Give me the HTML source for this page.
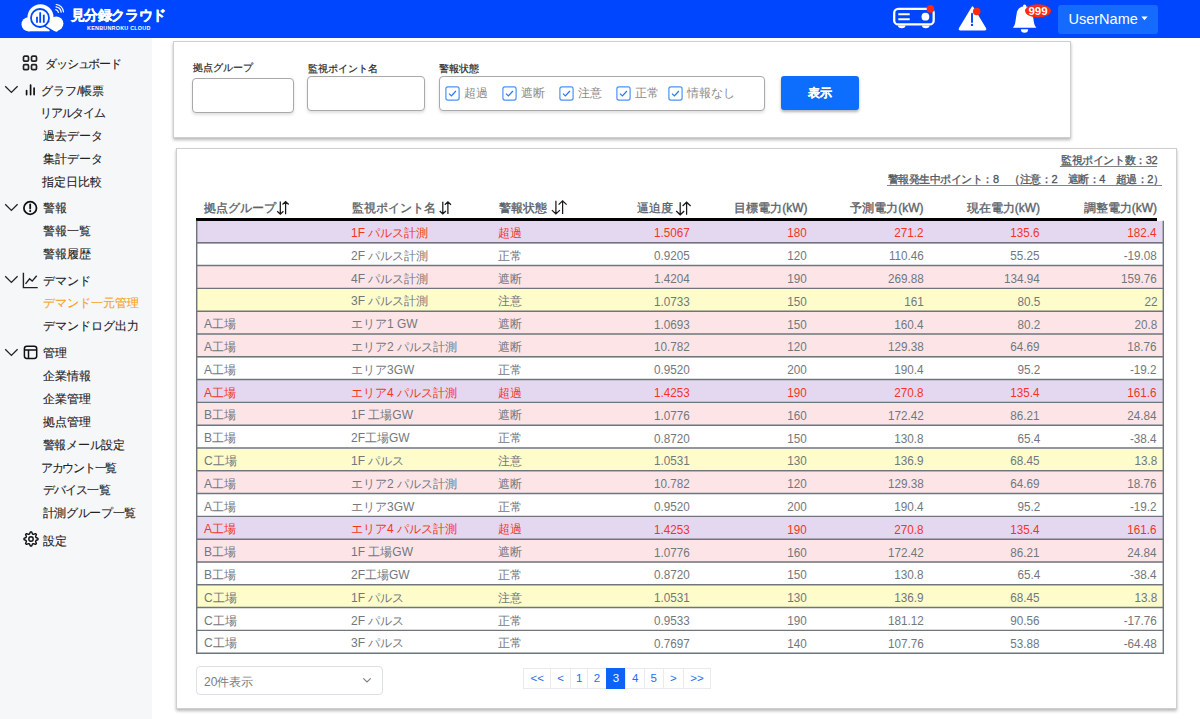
<!DOCTYPE html>
<html lang="ja"><head><meta charset="utf-8"><title>見分録クラウド</title>
<style>
*{box-sizing:border-box}
html,body{margin:0;padding:0}
body{width:1200px;height:719px;overflow:hidden;position:relative;background:#fff;font-family:"Liberation Sans",sans-serif;color:#222}
.abs{position:absolute}
#hdr{position:absolute;left:0;top:0;width:1200px;height:38px;background:#0046ff}
#side{position:absolute;left:0;top:38px;width:152px;height:681px;background:#f6f7f9}
.si{position:absolute;font-size:12px;line-height:22px;height:22px;white-space:nowrap;color:#222;-webkit-text-stroke:0.12px #222}
.si.act{color:#f7a21b;-webkit-text-stroke:0.12px #f7a21b}
.ic{position:absolute;display:block}
.card{position:absolute;background:#fff;border:1px solid #cfcfcf;box-shadow:0 2px 3px rgba(0,0,0,.28)}
.lbl{position:absolute;font-size:10px;line-height:12px;color:#2a2a2a;-webkit-text-stroke:0.2px #2a2a2a;white-space:nowrap}
.inp{position:absolute;background:#fff;border:1px solid #a9a9a9;border-radius:4px;box-shadow:0 2px 3px rgba(0,0,0,.12)}
.cb{position:absolute;width:15px;height:15px}
.cb svg{display:block}
.cbt{position:absolute;font-size:12px;line-height:20px;color:#8a8a8a;white-space:nowrap}
.btn{position:absolute;background:#0d6efd;color:#fff;font-size:12px;font-weight:bold;-webkit-text-stroke:0.2px #fff;text-align:center;border-radius:3px;box-shadow:0 2px 3px rgba(0,0,0,.3)}
.row{position:absolute;left:196px;width:968px;height:22.85px}
.row.p{background:#e3d8ef}
.row.k{background:#fde5e7}
.row.y{background:#fefccb}
.row.w{background:#fff}
.c{position:absolute;top:2.2px;font-size:12px;line-height:21.75px;color:#72777e;white-space:nowrap}
.row.p .c{color:#f6341e}
.c.n{font-size:13px;transform:scaleX(0.9);transform-origin:100% 50%;top:1.6px}
.th{position:absolute;top:199.5px;font-size:12px;line-height:16px;color:#5c6269;-webkit-text-stroke:0.35px #5c6269;white-space:nowrap}
.sort{position:absolute;display:block}
.pg{position:absolute;top:668.3px;height:20.8px;border:1px solid #e8eaed;background:#fff;color:#1a6ef7;font-size:11.5px;line-height:18.8px;text-align:center}
.pg.on{background:#0d63f7;border-color:#0d63f7;color:#fff}
</style></head><body>
<div id="hdr">
 <svg class="abs" style="left:19px;top:2px" width="48" height="32" viewBox="0 0 48 32">
  <g fill="#fff">
   <circle cx="9.6" cy="22.3" r="7.1"/>
   <circle cx="21.5" cy="15.3" r="13"/>
   <rect x="9.6" y="19" width="21" height="10.3"/>
  </g>
  <path d="M26.8 21.2L37 27.2" stroke="#0046ff" stroke-width="7.6" stroke-linecap="round"/>
  <circle cx="37.2" cy="21.6" r="7.2" fill="#fff"/>
  <path d="M26.8 21.2L37 27.2" stroke="#fff" stroke-width="5" stroke-linecap="round"/>
  <circle cx="21" cy="16" r="9" fill="#fff" stroke="#0046ff" stroke-width="1.8"/>
  <path d="M18 14.7V20.7M21.2 10.3V20.7M24.8 12.7V20.7" stroke="#0046ff" stroke-width="1.8"/>
  <g fill="none" stroke="#fff" stroke-width="1.2" stroke-linecap="round">
   <path d="M36.8 7.6A3.6 3.6 0 0 1 39.4 10.4"/>
   <path d="M37 4.9A6.2 6.2 0 0 1 42.2 10.2"/>
   <path d="M37.2 2.5A8.6 8.6 0 0 1 44.5 9.9"/>
  </g>
 </svg>
 <div class="abs" style="left:70.5px;top:6px;font-size:14px;line-height:18px;font-weight:bold;color:#fff;white-space:nowrap;letter-spacing:-0.4px;-webkit-text-stroke:0.3px #fff">見分録クラウド</div>
 <div class="abs" style="left:87px;top:24.5px;font-size:5.4px;line-height:6px;font-weight:bold;color:#fff;white-space:nowrap;letter-spacing:0.25px">KENBUNROKU CLOUD</div>

 <svg class="abs" style="left:890px;top:4px" width="48" height="28" viewBox="0 0 48 28">
  <rect x="4.2" y="4.9" width="39.5" height="15.5" rx="4" fill="none" stroke="#fff" stroke-width="2.3"/>
  <path d="M8.3 10.3H19.7M8.3 15.3H19.7" stroke="#fff" stroke-width="2"/>
  <circle cx="35.4" cy="12.7" r="3.9" fill="#fff"/>
  <path d="M8 21.6H15.5A3.7 2.6 0 0 1 8 21.6Z" fill="#fff"/>
  <path d="M32 21.6H39.5A3.7 2.6 0 0 1 32 21.6Z" fill="#fff"/>
  <circle cx="40.4" cy="4.9" r="3.8" fill="#fb2a10"/>
 </svg>
 <svg class="abs" style="left:955px;top:3px" width="36" height="30" viewBox="0 0 36 30">
  <path d="M17.5 4.2L30.3 25.5Q31 26.6 29.7 26.6H5.3Q4 26.6 4.7 25.5Z" fill="#fff" stroke="#fff" stroke-width="1.6" stroke-linejoin="round"/>
  <path d="M17 10.8V19" stroke="#0046ff" stroke-width="1.9" stroke-linecap="round"/>
  <circle cx="17" cy="21.9" r="1.2" fill="#0046ff"/>
  <circle cx="21.7" cy="8.5" r="3.8" fill="#fb2a10"/>
 </svg>
 <svg class="abs" style="left:1005px;top:0" width="50" height="38" viewBox="0 0 50 38">
  <path d="M19.6 6.3C15.5 6.3 11.9 9.2 11.5 14.5L10.3 22.3C9.9 24.9 9 26.3 7.9 27.7H31.3C30.2 26.3 29.3 24.9 28.9 22.3L27.7 14.5C27.3 9.2 23.7 6.3 19.6 6.3Z" fill="#fff"/>
  <circle cx="19.6" cy="6" r="1.6" fill="#fff"/>
  <path d="M15.9 29.2H23.1A3.6 3.5 0 0 1 15.9 29.2Z" fill="#fff"/>
  <ellipse cx="33" cy="10.8" rx="13" ry="6.6" fill="#fb2a10"/>
 </svg>
 <div class="abs" style="left:1025px;top:4px;width:26px;height:14px;color:#fff;font-size:11.5px;line-height:14px;font-weight:bold;text-align:center">999</div>
 <div class="abs" style="left:1058px;top:4.5px;width:100px;height:29px;border-radius:3px;background:#156bff"></div>
 <div class="abs" style="left:1068.5px;top:9px;font-size:14.5px;line-height:20px;color:#fff;white-space:nowrap">UserName</div>
 <svg class="abs" style="left:1141px;top:16px" width="7" height="5" viewBox="0 0 7 5"><path d="M0.4 0.6H6.6L3.5 4.2Z" fill="#fff"/></svg>
</div>

<div id="side"></div>
<svg class="ic" style="left:22px;top:55.0px" width="16" height="16" viewBox="0 0 16 16" fill="none" stroke="#222" stroke-width="1.7"><rect x="1.5" y="1.2" width="5" height="5" rx="1.2"/><rect x="9.5" y="1.2" width="5" height="5" rx="1.2"/><rect x="1.5" y="9.7" width="5" height="5" rx="1.2"/><rect x="9.5" y="9.7" width="5" height="5" rx="1.2"/></svg>
<div class="si" style="left:45.2px;top:52.75px;letter-spacing:-1.2px">ダッシュボード</div>
<svg class="ic" style="left:4px;top:84.9px" width="15" height="9" viewBox="0 0 15 9"><path d="M1.2 1.2L7.4 7.4L13.6 1.2" fill="none" stroke="#222" stroke-width="1.3"/></svg><svg class="ic" style="left:24px;top:83.5px" width="13" height="12" viewBox="0 0 13 12" fill="none" stroke="#111" stroke-width="1.7" stroke-linecap="round"><path d="M2.6 6.6V10.6M6.6 1V10.6M10.1 4V10.6"/></svg>
<div class="si" style="left:41.0px;top:79.90px">グラフ/帳票</div>
<div class="si" style="left:40.0px;top:102.20px;letter-spacing:-1.2px">リアルタイム</div>
<div class="si" style="left:42.5px;top:125.00px">過去データ</div>
<div class="si" style="left:42.5px;top:147.90px">集計データ</div>
<div class="si" style="left:42.0px;top:170.90px">指定日比較</div>
<svg class="ic" style="left:4px;top:202.9px" width="15" height="9" viewBox="0 0 15 9"><path d="M1.2 1.2L7.4 7.4L13.6 1.2" fill="none" stroke="#222" stroke-width="1.3"/></svg><svg class="ic" style="left:22px;top:199.5px" width="16" height="16" viewBox="0 0 16 16"><circle cx="8.2" cy="8" r="6.3" fill="none" stroke="#111" stroke-width="1.75"/><path d="M8.2 4.4V8.5" stroke="#111" stroke-width="1.8" stroke-linecap="round"/><circle cx="8.2" cy="11.1" r="1.05" fill="#111"/></svg>
<div class="si" style="left:42.5px;top:197.30px">警報</div>
<div class="si" style="left:42.5px;top:220.00px">警報一覧</div>
<div class="si" style="left:42.5px;top:242.60px">警報履歴</div>
<svg class="ic" style="left:4px;top:275.4px" width="15" height="9" viewBox="0 0 15 9"><path d="M1.2 1.2L7.4 7.4L13.6 1.2" fill="none" stroke="#222" stroke-width="1.3"/></svg><svg class="ic" style="left:22px;top:272.0px" width="17" height="17" viewBox="0 0 17 17" fill="none" stroke="#222" stroke-width="1.4"><path d="M1.4 0.8V15.6H15.7"/><path d="M3.5 11.9L7.6 6.8L10.2 9.1L14.7 3.8"/></svg>
<div class="si" style="left:42.5px;top:269.50px">デマンド</div>
<div class="si act" style="left:42.5px;top:292.40px">デマンド一元管理</div>
<div class="si" style="left:42.5px;top:314.60px">デマンドログ出力</div>
<svg class="ic" style="left:4px;top:347.9px" width="15" height="9" viewBox="0 0 15 9"><path d="M1.2 1.2L7.4 7.4L13.6 1.2" fill="none" stroke="#222" stroke-width="1.3"/></svg><svg class="ic" style="left:23px;top:345.0px" width="15" height="15" viewBox="0 0 15 15" fill="none" stroke="#111" stroke-width="1.5"><rect x="1.4" y="1.2" width="12.3" height="12.3" rx="2.4"/><path d="M1.4 4.9H13.7M5.5 4.9V13.5"/></svg>
<div class="si" style="left:42.5px;top:342.30px">管理</div>
<div class="si" style="left:42.5px;top:365.00px">企業情報</div>
<div class="si" style="left:42.5px;top:388.10px">企業管理</div>
<div class="si" style="left:42.5px;top:411.00px">拠点管理</div>
<div class="si" style="left:42.5px;top:434.30px;letter-spacing:-0.25px">警報メール設定</div>
<div class="si" style="left:41.0px;top:456.60px;letter-spacing:-1.3px">アカウント一覧</div>
<div class="si" style="left:42.5px;top:479.30px;letter-spacing:-0.8px">デバイス一覧</div>
<div class="si" style="left:42.5px;top:502.10px;letter-spacing:-0.3px">計測グループ一覧</div>
<svg class="ic" style="left:22.5px;top:530.7px" width="16" height="16" viewBox="0 0 16 16" fill="none" stroke="#111" stroke-width="1.4" stroke-linejoin="round"><polygon points="7.31,1.03 8.69,1.03 9.51,3.02 10.45,3.41 12.44,2.59 13.41,3.56 12.59,5.55 12.98,6.49 14.97,7.31 14.97,8.69 12.98,9.51 12.59,10.45 13.41,12.44 12.44,13.41 10.45,12.59 9.51,12.98 8.69,14.97 7.31,14.97 6.49,12.98 5.55,12.59 3.56,13.41 2.59,12.44 3.41,10.45 3.02,9.51 1.03,8.69 1.03,7.31 3.02,6.49 3.41,5.55 2.59,3.56 3.56,2.59 5.55,3.41 6.49,3.02"/><circle cx="8" cy="8" r="2.2"/></svg>
<div class="si" style="left:42.5px;top:529.70px">設定</div>

<div class="card" style="left:173px;top:41px;width:898px;height:96.5px"></div>
<div class="lbl" style="left:193px;top:61.5px">拠点グループ</div>
<div class="inp" style="left:192px;top:77.5px;width:101.5px;height:35px"></div>
<div class="lbl" style="left:307.5px;top:63px">監視ポイント名</div>
<div class="inp" style="left:307px;top:76.3px;width:118px;height:34.6px"></div>
<div class="lbl" style="left:439px;top:63px">警報状態</div>
<div class="inp" style="left:439px;top:76.3px;width:326px;height:34.8px"></div>
<div class="cb" style="left:444.8px;top:85.5px"><svg width="15" height="15" viewBox="0 0 15 15"><rect x="0.9" y="0.9" width="13.2" height="13.2" rx="2" fill="#fff" stroke="#4b93f5" stroke-width="1.2"/><path d="M4 7.6L6.4 9.9L10.9 5" fill="none" stroke="#2a78ea" stroke-width="1.25"/></svg></div>
<div class="cbt" style="left:463.8px;top:83px">超過</div>
<div class="cb" style="left:502.0px;top:85.5px"><svg width="15" height="15" viewBox="0 0 15 15"><rect x="0.9" y="0.9" width="13.2" height="13.2" rx="2" fill="#fff" stroke="#4b93f5" stroke-width="1.2"/><path d="M4 7.6L6.4 9.9L10.9 5" fill="none" stroke="#2a78ea" stroke-width="1.25"/></svg></div>
<div class="cbt" style="left:521.0px;top:83px">遮断</div>
<div class="cb" style="left:559.2px;top:85.5px"><svg width="15" height="15" viewBox="0 0 15 15"><rect x="0.9" y="0.9" width="13.2" height="13.2" rx="2" fill="#fff" stroke="#4b93f5" stroke-width="1.2"/><path d="M4 7.6L6.4 9.9L10.9 5" fill="none" stroke="#2a78ea" stroke-width="1.25"/></svg></div>
<div class="cbt" style="left:578.2px;top:83px">注意</div>
<div class="cb" style="left:616.3px;top:85.5px"><svg width="15" height="15" viewBox="0 0 15 15"><rect x="0.9" y="0.9" width="13.2" height="13.2" rx="2" fill="#fff" stroke="#4b93f5" stroke-width="1.2"/><path d="M4 7.6L6.4 9.9L10.9 5" fill="none" stroke="#2a78ea" stroke-width="1.25"/></svg></div>
<div class="cbt" style="left:635.3px;top:83px">正常</div>
<div class="cb" style="left:667.5px;top:85.5px"><svg width="15" height="15" viewBox="0 0 15 15"><rect x="0.9" y="0.9" width="13.2" height="13.2" rx="2" fill="#fff" stroke="#4b93f5" stroke-width="1.2"/><path d="M4 7.6L6.4 9.9L10.9 5" fill="none" stroke="#2a78ea" stroke-width="1.25"/></svg></div>
<div class="cbt" style="left:686.5px;top:83px">情報なし</div>
<div class="btn" style="left:781px;top:75.6px;width:77.5px;height:34.2px;line-height:34.2px">表示</div>

<div class="card" style="left:176px;top:148px;width:1000.5px;height:560.5px"></div>
<div class="abs" style="left:1060px;top:152.5px;width:96.5px;height:14.3px;border-bottom:1px solid #80858c"></div>
<div class="abs" id="t1" style="left:1061px;top:152.5px;font-size:11px;line-height:14px;color:#50565e;white-space:nowrap;-webkit-text-stroke:0.3px #50565e;letter-spacing:-0.4px">監視ポイント数：32</div>
<div class="abs" style="left:887px;top:172.3px;width:274.5px;height:14.2px;border-bottom:1px solid #80858c"></div>
<div class="abs" id="t2" style="left:887.5px;top:172.3px;font-size:11px;line-height:14px;color:#50565e;white-space:nowrap;-webkit-text-stroke:0.3px #50565e;letter-spacing:-0.45px">警報発生中ポイント：8　（注意：2　遮断：4　超過：2）</div>

<div class="th" style="left:204px">拠点グループ</div>
<div class="th" style="left:351.5px">監視ポイント名</div>
<div class="th" style="left:498.5px">警報状態</div>
<div class="th" style="right:527px">逼迫度</div>
<div class="th" style="right:392.5px">目標電力(kW)</div>
<div class="th" style="right:276.5px">予測電力(kW)</div>
<div class="th" style="right:160px">現在電力(kW)</div>
<div class="th" style="right:43px">調整電力(kW)</div>
<svg class="abs" style="left:0;top:195px" width="1200" height="25" viewBox="0 195 1200 25"><path d="M280.3 201.5V213.89999999999998M277.2 211.255L280.3 214.2L283.40000000000003 211.255M285.6 214.2V201.8M282.5 204.445L285.6 201.5L288.70000000000005 204.445M442.8 201.8V213.7M439.7 211.055L442.8 214.0L445.90000000000003 211.055M447.9 214.0V202.10000000000002M444.79999999999995 204.745L447.9 201.8L451.0 204.745M555.9 200.8V213.6M551.9 210.1L555.9 213.9L559.9 210.1M562.6 213.9V201.10000000000002M558.6 204.60000000000002L562.6 200.8L566.6 204.60000000000002M680.2 202.2V214.5M676.2 211.0L680.2 214.8L684.2 211.0M686.6 214.8V202.5M682.6 206.0L686.6 202.2L690.6 206.0" fill="none" stroke="#1a1a1a" stroke-width="1.25"/></svg>
<div class="abs" style="left:196px;top:218.1px;width:961px;height:2.7px;background:#000"></div>
<div class="row p" style="top:220.80px">
<span class="c l" style="left:8.0px"></span>
<span class="c l" style="left:155.0px">1F パルス計測</span>
<span class="c l" style="left:302.0px">超過</span>
<span class="c r n" style="right:474.0px">1.5067</span>
<span class="c r n" style="right:357.0px">180</span>
<span class="c r n" style="right:240.5px">271.2</span>
<span class="c r n" style="right:124.0px">135.6</span>
<span class="c r n" style="right:7.0px">182.4</span>
</div>
<div class="row w" style="top:243.60px">
<span class="c l" style="left:8.0px"></span>
<span class="c l" style="left:155.0px">2F パルス計測</span>
<span class="c l" style="left:302.0px">正常</span>
<span class="c r n" style="right:474.0px">0.9205</span>
<span class="c r n" style="right:357.0px">120</span>
<span class="c r n" style="right:240.5px">110.46</span>
<span class="c r n" style="right:124.0px">55.25</span>
<span class="c r n" style="right:7.0px">-19.08</span>
</div>
<div class="row k" style="top:266.40px">
<span class="c l" style="left:8.0px"></span>
<span class="c l" style="left:155.0px">4F パルス計測</span>
<span class="c l" style="left:302.0px">遮断</span>
<span class="c r n" style="right:474.0px">1.4204</span>
<span class="c r n" style="right:357.0px">190</span>
<span class="c r n" style="right:240.5px">269.88</span>
<span class="c r n" style="right:124.0px">134.94</span>
<span class="c r n" style="right:7.0px">159.76</span>
</div>
<div class="row y" style="top:289.20px">
<span class="c l" style="left:8.0px"></span>
<span class="c l" style="left:155.0px">3F パルス計測</span>
<span class="c l" style="left:302.0px">注意</span>
<span class="c r n" style="right:474.0px">1.0733</span>
<span class="c r n" style="right:357.0px">150</span>
<span class="c r n" style="right:240.5px">161</span>
<span class="c r n" style="right:124.0px">80.5</span>
<span class="c r n" style="right:7.0px">22</span>
</div>
<div class="row k" style="top:312.00px">
<span class="c l" style="left:8.0px">A工場</span>
<span class="c l" style="left:155.0px">エリア1 GW</span>
<span class="c l" style="left:302.0px">遮断</span>
<span class="c r n" style="right:474.0px">1.0693</span>
<span class="c r n" style="right:357.0px">150</span>
<span class="c r n" style="right:240.5px">160.4</span>
<span class="c r n" style="right:124.0px">80.2</span>
<span class="c r n" style="right:7.0px">20.8</span>
</div>
<div class="row k" style="top:334.80px">
<span class="c l" style="left:8.0px">A工場</span>
<span class="c l" style="left:155.0px">エリア2 パルス計測</span>
<span class="c l" style="left:302.0px">遮断</span>
<span class="c r n" style="right:474.0px">10.782</span>
<span class="c r n" style="right:357.0px">120</span>
<span class="c r n" style="right:240.5px">129.38</span>
<span class="c r n" style="right:124.0px">64.69</span>
<span class="c r n" style="right:7.0px">18.76</span>
</div>
<div class="row w" style="top:357.60px">
<span class="c l" style="left:8.0px">A工場</span>
<span class="c l" style="left:155.0px">エリア3GW</span>
<span class="c l" style="left:302.0px">正常</span>
<span class="c r n" style="right:474.0px">0.9520</span>
<span class="c r n" style="right:357.0px">200</span>
<span class="c r n" style="right:240.5px">190.4</span>
<span class="c r n" style="right:124.0px">95.2</span>
<span class="c r n" style="right:7.0px">-19.2</span>
</div>
<div class="row p" style="top:380.40px">
<span class="c l" style="left:8.0px">A工場</span>
<span class="c l" style="left:155.0px">エリア4 パルス計測</span>
<span class="c l" style="left:302.0px">超過</span>
<span class="c r n" style="right:474.0px">1.4253</span>
<span class="c r n" style="right:357.0px">190</span>
<span class="c r n" style="right:240.5px">270.8</span>
<span class="c r n" style="right:124.0px">135.4</span>
<span class="c r n" style="right:7.0px">161.6</span>
</div>
<div class="row k" style="top:403.20px">
<span class="c l" style="left:8.0px">B工場</span>
<span class="c l" style="left:155.0px">1F 工場GW</span>
<span class="c l" style="left:302.0px">遮断</span>
<span class="c r n" style="right:474.0px">1.0776</span>
<span class="c r n" style="right:357.0px">160</span>
<span class="c r n" style="right:240.5px">172.42</span>
<span class="c r n" style="right:124.0px">86.21</span>
<span class="c r n" style="right:7.0px">24.84</span>
</div>
<div class="row w" style="top:426.00px">
<span class="c l" style="left:8.0px">B工場</span>
<span class="c l" style="left:155.0px">2F工場GW</span>
<span class="c l" style="left:302.0px">正常</span>
<span class="c r n" style="right:474.0px">0.8720</span>
<span class="c r n" style="right:357.0px">150</span>
<span class="c r n" style="right:240.5px">130.8</span>
<span class="c r n" style="right:124.0px">65.4</span>
<span class="c r n" style="right:7.0px">-38.4</span>
</div>
<div class="row y" style="top:448.80px">
<span class="c l" style="left:8.0px">C工場</span>
<span class="c l" style="left:155.0px">1F パルス</span>
<span class="c l" style="left:302.0px">注意</span>
<span class="c r n" style="right:474.0px">1.0531</span>
<span class="c r n" style="right:357.0px">130</span>
<span class="c r n" style="right:240.5px">136.9</span>
<span class="c r n" style="right:124.0px">68.45</span>
<span class="c r n" style="right:7.0px">13.8</span>
</div>
<div class="row k" style="top:471.60px">
<span class="c l" style="left:8.0px">A工場</span>
<span class="c l" style="left:155.0px">エリア2 パルス計測</span>
<span class="c l" style="left:302.0px">遮断</span>
<span class="c r n" style="right:474.0px">10.782</span>
<span class="c r n" style="right:357.0px">120</span>
<span class="c r n" style="right:240.5px">129.38</span>
<span class="c r n" style="right:124.0px">64.69</span>
<span class="c r n" style="right:7.0px">18.76</span>
</div>
<div class="row w" style="top:494.40px">
<span class="c l" style="left:8.0px">A工場</span>
<span class="c l" style="left:155.0px">エリア3GW</span>
<span class="c l" style="left:302.0px">正常</span>
<span class="c r n" style="right:474.0px">0.9520</span>
<span class="c r n" style="right:357.0px">200</span>
<span class="c r n" style="right:240.5px">190.4</span>
<span class="c r n" style="right:124.0px">95.2</span>
<span class="c r n" style="right:7.0px">-19.2</span>
</div>
<div class="row p" style="top:517.20px">
<span class="c l" style="left:8.0px">A工場</span>
<span class="c l" style="left:155.0px">エリア4 パルス計測</span>
<span class="c l" style="left:302.0px">超過</span>
<span class="c r n" style="right:474.0px">1.4253</span>
<span class="c r n" style="right:357.0px">190</span>
<span class="c r n" style="right:240.5px">270.8</span>
<span class="c r n" style="right:124.0px">135.4</span>
<span class="c r n" style="right:7.0px">161.6</span>
</div>
<div class="row k" style="top:540.00px">
<span class="c l" style="left:8.0px">B工場</span>
<span class="c l" style="left:155.0px">1F 工場GW</span>
<span class="c l" style="left:302.0px">遮断</span>
<span class="c r n" style="right:474.0px">1.0776</span>
<span class="c r n" style="right:357.0px">160</span>
<span class="c r n" style="right:240.5px">172.42</span>
<span class="c r n" style="right:124.0px">86.21</span>
<span class="c r n" style="right:7.0px">24.84</span>
</div>
<div class="row w" style="top:562.80px">
<span class="c l" style="left:8.0px">B工場</span>
<span class="c l" style="left:155.0px">2F工場GW</span>
<span class="c l" style="left:302.0px">正常</span>
<span class="c r n" style="right:474.0px">0.8720</span>
<span class="c r n" style="right:357.0px">150</span>
<span class="c r n" style="right:240.5px">130.8</span>
<span class="c r n" style="right:124.0px">65.4</span>
<span class="c r n" style="right:7.0px">-38.4</span>
</div>
<div class="row y" style="top:585.60px">
<span class="c l" style="left:8.0px">C工場</span>
<span class="c l" style="left:155.0px">1F パルス</span>
<span class="c l" style="left:302.0px">注意</span>
<span class="c r n" style="right:474.0px">1.0531</span>
<span class="c r n" style="right:357.0px">130</span>
<span class="c r n" style="right:240.5px">136.9</span>
<span class="c r n" style="right:124.0px">68.45</span>
<span class="c r n" style="right:7.0px">13.8</span>
</div>
<div class="row w" style="top:608.40px">
<span class="c l" style="left:8.0px">C工場</span>
<span class="c l" style="left:155.0px">2F パルス</span>
<span class="c l" style="left:302.0px">正常</span>
<span class="c r n" style="right:474.0px">0.9533</span>
<span class="c r n" style="right:357.0px">190</span>
<span class="c r n" style="right:240.5px">181.12</span>
<span class="c r n" style="right:124.0px">90.56</span>
<span class="c r n" style="right:7.0px">-17.76</span>
</div>
<div class="row w" style="top:631.20px">
<span class="c l" style="left:8.0px">C工場</span>
<span class="c l" style="left:155.0px">3F パルス</span>
<span class="c l" style="left:302.0px">正常</span>
<span class="c r n" style="right:474.0px">0.7697</span>
<span class="c r n" style="right:357.0px">140</span>
<span class="c r n" style="right:240.5px">107.76</span>
<span class="c r n" style="right:124.0px">53.88</span>
<span class="c r n" style="right:7.0px">-64.48</span>
</div>
<svg class="abs" style="left:0;top:0" width="1200" height="719" viewBox="0 0 1200 719"><path d="M196 242.75H1164M196 265.55H1164M196 288.35H1164M196 311.15H1164M196 333.95H1164M196 356.75H1164M196 379.55H1164M196 402.35H1164M196 425.15H1164M196 447.95H1164M196 470.75H1164M196 493.55H1164M196 516.35H1164M196 539.15H1164M196 561.95H1164M196 584.75H1164M196 607.55H1164M196 630.35H1164M196 653.15H1164M196.7 220.8V653.9M1163.3 220.8V653.9" fill="none" stroke="#6f757c" stroke-width="1.45"/></svg>

<div class="abs" style="left:196px;top:665.9px;width:186.5px;height:28.8px;border:1px solid #dcdfe3;border-radius:4px;background:#fff"></div>
<div class="abs" style="left:204px;top:672px;font-size:12px;line-height:20px;color:#777c83;white-space:nowrap">20件表示</div>
<svg class="abs" style="left:362px;top:676.5px" width="10" height="7" viewBox="0 0 10 7"><path d="M1.3 1.3L5 5L8.7 1.3" fill="none" stroke="#7b8088" stroke-width="1.2"/></svg>
<div class="pg" style="left:523.4px;width:27.7px">&lt;&lt;</div>
<div class="pg" style="left:550.1px;width:21.0px">&lt;</div>
<div class="pg" style="left:570.1px;width:18.1px">1</div>
<div class="pg" style="left:587.2px;width:19.7px">2</div>
<div class="pg on" style="left:605.9px;width:20.3px">3</div>
<div class="pg" style="left:625.2px;width:19.8px">4</div>
<div class="pg" style="left:644.0px;width:19.5px">5</div>
<div class="pg" style="left:662.5px;width:21.6px">&gt;</div>
<div class="pg" style="left:683.1px;width:27.6px">&gt;&gt;</div>
</body></html>
